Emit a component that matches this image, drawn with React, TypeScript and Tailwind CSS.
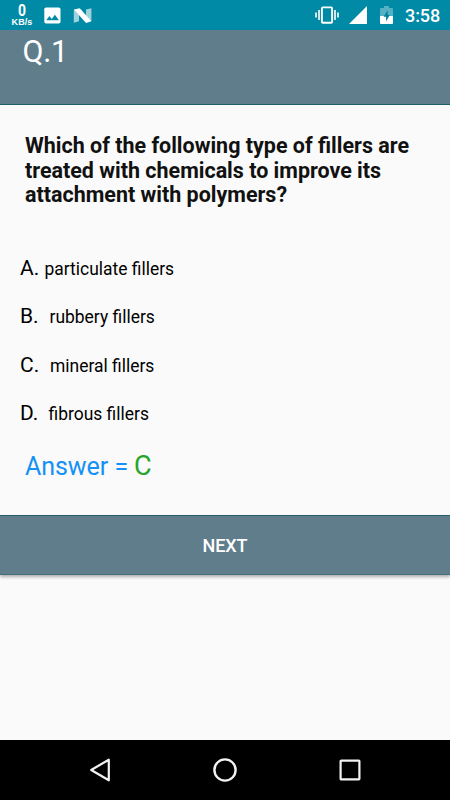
import React from "react";

const options = [
  { letter: "A.", text: "particulate fillers", indent: "pl-[24.5px]" },
  { letter: "B.", text: "rubbery fillers", indent: "pl-[29.5px]" },
  { letter: "C.", text: "mineral fillers", indent: "pl-[30px]" },
  { letter: "D.", text: "fibrous fillers", indent: "pl-[28.5px]" },
];

function StatusBar() {
  return (
    <header className="flex h-[30px] shrink-0 items-center bg-[#008aa5] text-white">
      <div className="ml-[11px] flex w-[22px] flex-col items-center font-bold">
        <span className="h-[14px] scale-x-[0.82] text-[17px] leading-[15px]">0</span>
        <span className="h-[10px] font-['Liberation_Sans',sans-serif] text-[9px] leading-[10px] tracking-[0.1px]">KB/s</span>
      </div>
      <svg className="ml-[11px]" width="17" height="17" viewBox="0 0 17 17">
        <rect x="0.3" y="0.5" width="16.2" height="16" rx="1.8" fill="#fff" />
        <path d="M2.3 13.2 5.4 9.1l2.4 2.8 3.1-4.2 4 5.5z" fill="#008aa5" />
      </svg>
      <svg className="ml-[12px]" width="20" height="17" viewBox="0 0 20 17">
        <path d="M.8 2.9 6 1.7v12.6L.8 15.7zM13 2.6l5.4-1.4v12.8L13 15.4z" fill="#9fd2dc" />
        <path d="M1 2.6 6.8 1.2 18.4 14.2 13 15.9z" fill="#fff" />
      </svg>
      <svg className="ml-[222px]" width="24" height="20" viewBox="0 0 24 20">
        <path d="M1 7.5v5M4 5v10M20 5v10M23 7.5v5" stroke="#fff" strokeWidth="1.6" />
        <rect x="6.9" y="2.4" width="10.2" height="15.4" rx="1" fill="none" stroke="#fff" strokeWidth="1.9" />
      </svg>
      <svg className="ml-[10px]" width="18" height="18" viewBox="0 0 18 18">
        <path d="M0 18 18 0v18z" fill="#fff" />
      </svg>
      <svg className="ml-[13px]" width="13" height="18" viewBox="0 0 13 18">
        <path d="M1 2h3V0h5v2h3q1 0 1 1v7H0V3q0-1 1-1z" fill="#54b0c2" />
        <path d="M0 10h13v7q0 1-1 1H1q-1 0-1-1z" fill="#fff" />
        <path d="M7.7 4.3 3.6 10.8h2.5v4.7L9.7 9H7.7z" fill="#008099" />
      </svg>
      <span className="ml-[12px] whitespace-nowrap pt-px text-[18px] font-medium leading-[30px] tracking-[-0.1px]">3:58</span>
    </header>
  );
}

function NavigationBar() {
  return (
    <nav className="flex h-[60px] shrink-0 items-center justify-between bg-black px-[88px]">
      <svg width="24" height="26" viewBox="0 0 24 26" fill="none" stroke="#f2f2f2" strokeWidth="2.2" strokeLinejoin="round">
        <path d="M3.2 13 20.8 2.7v20.6z" />
      </svg>
      <svg width="26" height="26" viewBox="0 0 26 26" fill="none" stroke="#f2f2f2" strokeWidth="2.4">
        <circle cx="13" cy="13" r="10.6" />
      </svg>
      <svg width="24" height="24" viewBox="0 0 24 24" fill="none" stroke="#f2f2f2" strokeWidth="2.2">
        <rect x="2.6" y="2.6" width="18.8" height="18.8" rx="0.6" />
      </svg>
    </nav>
  );
}

export default function App() {
  return (
    <div className="flex h-[800px] w-[450px] flex-col overflow-hidden bg-[#fafafa] font-[Roboto,sans-serif]">
      <StatusBar />
      <div className="h-[75px] shrink-0 border-b border-[#19606a] bg-[#607d8b] pl-[22.5px] pt-[4px]">
        <h1 className="text-[30.5px] leading-[36px] tracking-[-0.3px] text-white">Q.1</h1>
      </div>
      <main className="flex h-[410px] shrink-0 flex-col">
        <h2 className="ml-[25px] mt-[29px] whitespace-nowrap text-[21.48px] font-bold leading-[24.6px] text-[#111]">
          Which of the following type of fillers are<br />
          treated with chemicals to improve its<br />
          attachment with polymers?
        </h2>
        <ul className="mt-[36.2px] text-black">
          {options.map((option) => (
            <li key={option.letter} className="flex h-[48.3px] items-baseline pl-[20px]">
              <span className="w-0 whitespace-nowrap text-[21px] leading-[48px]">{option.letter}</span>
              <span className={`whitespace-nowrap text-[17.45px] leading-[48px] ${option.indent}`}>{option.text}</span>
            </li>
          ))}
        </ul>
        <p className="ml-[25px] mt-[12.3px] flex items-baseline gap-[6px] whitespace-nowrap leading-[34px]">
          <span className="text-[25px] tracking-[-0.05px] text-[#1590f5]">Answer =</span>
          <span className="text-[27px] text-[#25a52c]">C</span>
        </p>
      </main>
      <button className="flex h-[60px] shrink-0 items-center justify-center border-y border-t-[#265f6b] border-b-[#416f7e] bg-[#607d8b] text-[18px] font-medium tracking-[-0.1px] text-white shadow-[0_2px_3px_rgba(0,0,0,0.3)]">
        NEXT
      </button>
      <div className="flex-1" />
      <NavigationBar />
    </div>
  );
}
